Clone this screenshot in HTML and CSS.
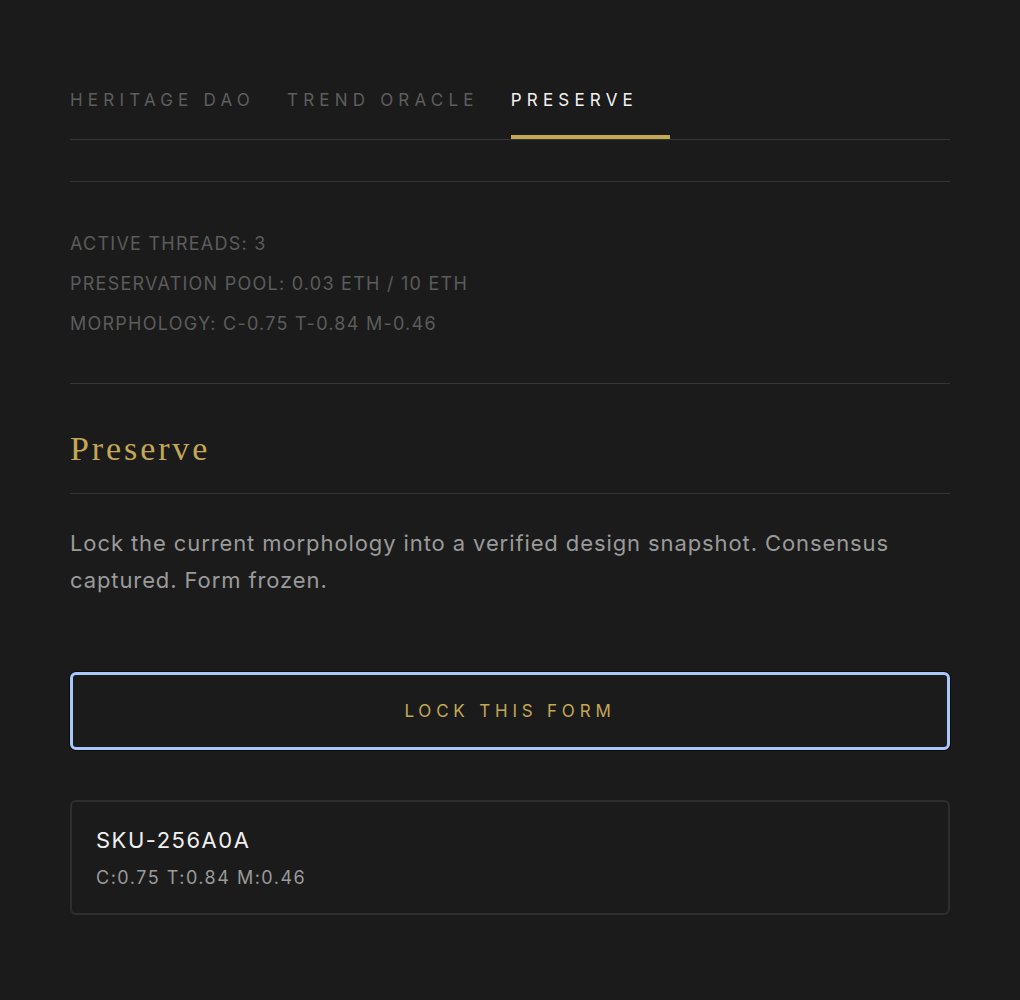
FILE: index.html
```html
<!DOCTYPE html>
<html lang="en">
<head>
<meta charset="utf-8">
<title>Preserve</title>
<link rel="stylesheet" href="styles.css">
</head>
<body>
<main class="page">
  <nav class="tabs">
    <a class="tab">HERITAGE DAO</a>
    <a class="tab">TREND ORACLE</a>
    <a class="tab tab-active">PRESERVE</a>
  </nav>
  <div class="rule-gap"></div>
  <section class="stats">
    <div class="stat">ACTIVE THREADS: 3</div>
    <div class="stat">PRESERVATION POOL: 0.03 ETH / 10 ETH</div>
    <div class="stat">MORPHOLOGY: C-0.75 T-0.84 M-0.46</div>
  </section>
  <section class="panel">
    <h2 class="panel-title">Preserve</h2>
    <p class="panel-desc">Lock the current morphology into a verified design snapshot. Consensus captured. Form frozen.</p>
    <button class="lock-btn">LOCK THIS FORM</button>
    <div class="sku-card">
      <div class="sku-id">SKU-256A0A</div>
      <div class="sku-meta">C:0.75 T:0.84 M:0.46</div>
    </div>
  </section>
</main>
</body>
</html>
```
FILE: styles.css
```css
html, body {
  margin: 0;
  padding: 0;
  background: #1b1b1b;
}
body {
  font-family: Inter, "Noto Sans", sans-serif;
  color: #e8e8e8;
}
.page {
  padding: 88px 70px 40px;
}
.tabs {
  display: flex;
  border-bottom: 1px solid #353535;
}
.tab {
  font-size: 17px;
  line-height: 24px;
  letter-spacing: 5.2px;
  color: #5e5e5e;
  padding: 0 32px 23px 0;
  border-bottom: 4px solid transparent;
}
.tab-active {
  color: #f2f2f2;
  border-bottom-color: #c4a855;
}
.rule-gap {
  height: 41px;
  border-bottom: 1px solid #353535;
}
.stats {
  padding: 42px 0 39px;
  border-bottom: 1px solid #353535;
}
.stat {
  font-size: 18px;
  line-height: 40px;
  letter-spacing: 1.25px;
  color: #5c5c5c;
}
.panel-title {
  margin: 45px 0 0;
  padding-bottom: 24px;
  border-bottom: 1px solid #353535;
  font-family: "Liberation Serif", "DejaVu Serif", serif;
  font-weight: 400;
  font-size: 34px;
  line-height: 40px;
  letter-spacing: 2.9px;
  color: #c4a855;
}
.panel-desc {
  margin: 31px 0 0;
  font-size: 22px;
  line-height: 37px;
  letter-spacing: 0.9px;
  color: #9a9a9a;
}
.lock-btn {
  display: block;
  width: 100%;
  height: 78px;
  margin-top: 73px;
  background: #1b1b1b;
  border: 3px solid #a8c7fa;
  border-radius: 6px;
  box-shadow: 0 0 0 1px #0c0c0c;
  font-family: Inter, "Noto Sans", sans-serif;
  font-size: 17px;
  letter-spacing: 4.8px;
  color: #c4a855;
}
.sku-card {
  margin-top: 50px;
  border: 2px solid #2e2e2e;
  border-radius: 6px;
  padding: 24px 24px 22px;
}
.sku-id {
  font-size: 22px;
  line-height: 28px;
  letter-spacing: 1.5px;
  color: #f0f0f0;
}
.sku-meta {
  margin-top: 11px;
  font-size: 18px;
  line-height: 26px;
  letter-spacing: 1.5px;
  color: #9a9a9a;
}
```
